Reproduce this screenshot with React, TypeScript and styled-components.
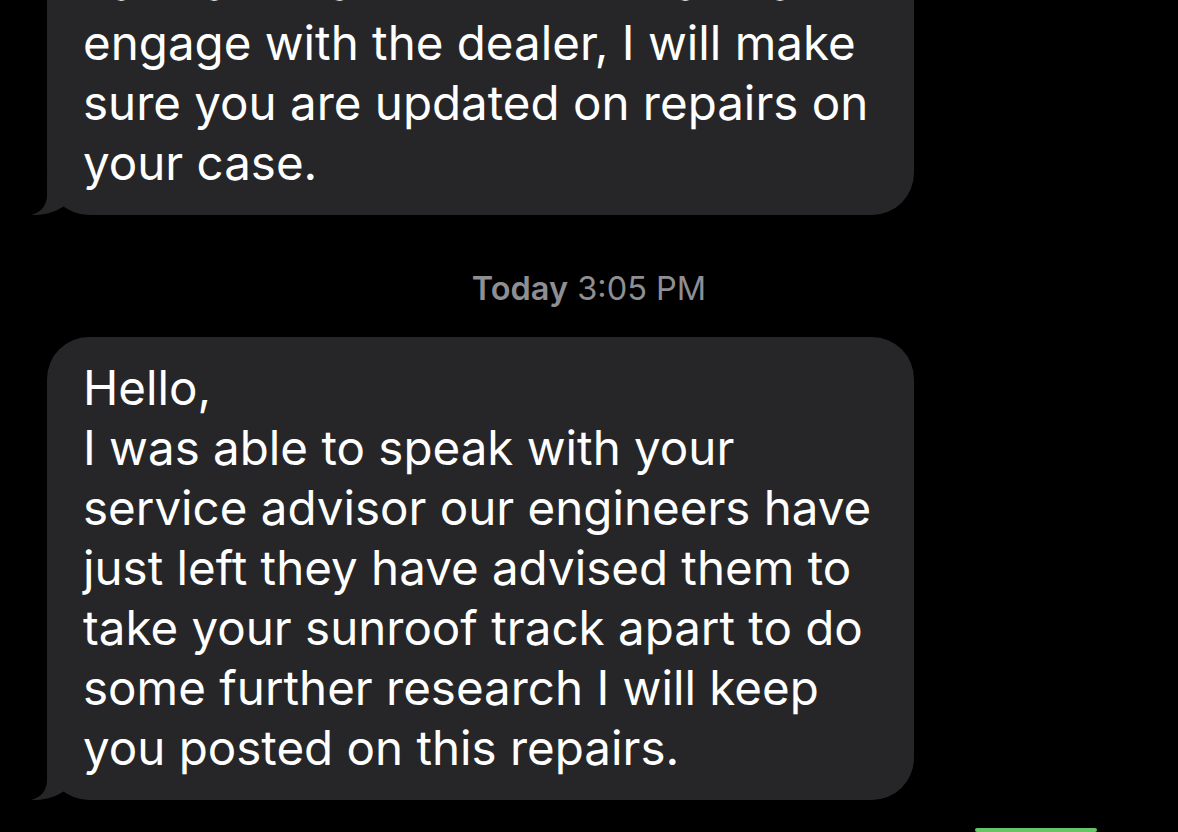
import React from "react";
import styled, {createGlobalStyle} from "styled-components";

const GlobalStyle = createGlobalStyle`
    html, body {
        margin: 0;
        padding: 0;
        background: #000;
        height: 832px;
        overflow: hidden;
    }
    * {
        box-sizing: border-box;
    }
`;

const Thread = styled.div`
    width: 1178px;
    height: 832px;
    overflow: hidden;
    display: flex;
    flex-direction: column;
    padding: 0 81px 0 47px;
    font-family: Inter, "Liberation Sans", sans-serif;
`;

const Bubble = styled.div<{ $offset?: number }>`
    position: relative;
    width: 867px;
    margin-top: ${p => p.$offset ?? 0}px;
    padding: 21px 36px 22px;
    background: #262628;
    border-radius: 42px;
    color: #fff;
    font-size: 47.5px;
    line-height: 60px;
`;

const Line = styled.div`
    position: relative;
    white-space: nowrap;
`;

const Tail = styled.svg`
    position: absolute;
    left: -16px;
    bottom: 0;
    width: 72px;
    height: 40px;
`;

const Stamp = styled.div`
    margin: 54px 0 28px;
    text-align: center;
    color: #8e8e93;
    font-size: 32.5px;
    line-height: 40px;
    padding-left: 34px;

    b {
        font-weight: 600;
    }
`;

const Sent = styled.div`
    align-self: flex-end;
    width: 122px;
    height: 60px;
    margin-top: 28px;
    border-radius: 30px;
    background: #65c466;
`;

const BubbleTail = () => (
    <Tail viewBox="-16 -40 72 40">
        <path
            d="M0 -40 L0 -20 C0 -9 -7 -2 -16 0 C-3 0.5 10 -3 20 -11 C29 -3 40 0 56 0 L56 -40 Z"
            fill="#262628"
        />
    </Tail>
);

const Message: React.FC<{ lines: string[]; offset?: number }> = ({lines, offset}) => (
    <Bubble $offset={offset}>
        <BubbleTail/>
        {lines.map((l, i) => <Line key={i}>{l}</Line>)}
    </Bubble>
);

const App: React.FC = () => {
    return (
        <>
            <GlobalStyle/>
            <Thread>
                <Message
                    offset={-68}
                    lines={[
                        "case and have our technical team",
                        "engage with the dealer, I will make",
                        "sure you are updated on repairs on",
                        "your case.",
                    ]}
                />
                <Stamp><b>Today</b> 3:05 PM</Stamp>
                <Message
                    lines={[
                        "Hello,",
                        "I was able to speak with your",
                        "service advisor our engineers have",
                        "just left they have advised them to",
                        "take your sunroof track apart to do",
                        "some further research I will keep",
                        "you posted on this repairs.",
                    ]}
                />
                <Sent/>
            </Thread>
        </>
    );
};

export default App;
